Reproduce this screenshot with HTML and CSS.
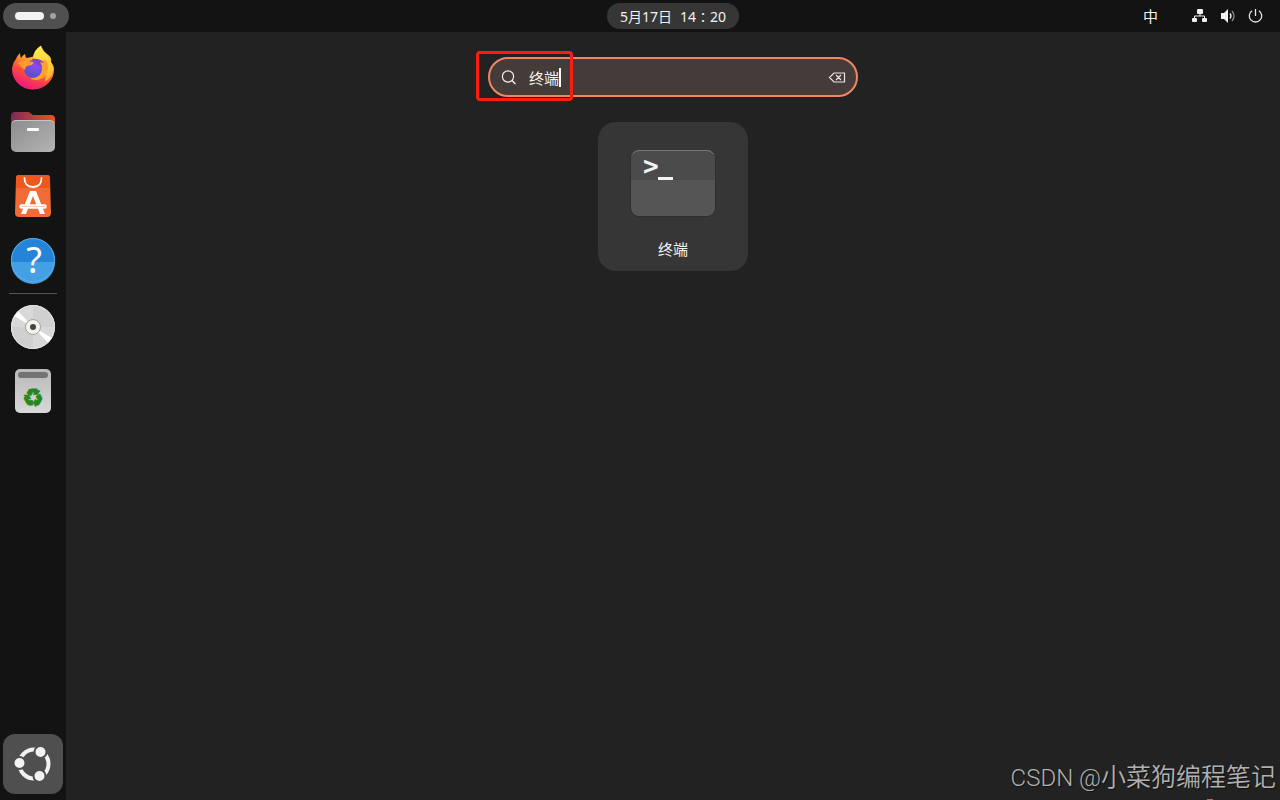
FILE: index.html
```html
<!DOCTYPE html>
<html lang="zh-CN">
  <head>
    <meta charset="utf-8">
    <title>终端</title>
    <link rel="stylesheet" href="styles.css">
  </head>
  <body>
    <header class="topbar">
      <div class="topbar-left">
        <button class="workspaces" aria-label="工作区">
          <span class="workspace-active"></span>
          <span class="workspace-dot"></span>
        </button>
      </div>
      <button class="clock"><span>5月17日</span><span>14∶20</span></button>
      <div class="topbar-right">
        <button class="input-method">中</button>
        <button class="system-menu" aria-label="系统菜单">
          <svg width="16" height="16" viewBox="0 0 16 16">
            <rect x="5" y="1" width="6" height="5" rx="1" fill="#f2f2f2"/>
            <rect x="0" y="10" width="5" height="4" rx="1" fill="#f2f2f2"/>
            <rect x="10" y="10" width="5" height="4" rx="1" fill="#f2f2f2"/>
            <path d="M8 5v3M2.500 11V8h10v3" fill="none" stroke="#f2f2f2"/>
          </svg>
          <svg width="16" height="16" viewBox="0 0 16 16">
            <path d="M1 5h3l4-4v14l-4-4H1z" fill="#f2f2f2"/>
            <path d="M10 5.500q2 2.500 0 5" fill="none" stroke="#f2f2f2" stroke-width="1.300"/>
            <path d="M12 3q4 5 0 10" fill="none" stroke="#8a8a8a" stroke-width="1.300"/>
          </svg>
          <svg width="16" height="16" viewBox="0 0 16 16">
            <path d="M4 2.700a6.200 6.200 0 1 0 7 0M7.500 1v7" fill="none" stroke="#e6e6e6" stroke-width="1.300"/>
          </svg>
        </button>
      </div>
    </header>

    <div class="desktop">
      <nav class="dock">
        <button class="dock-item" aria-label="Firefox">
          <svg width="48" height="48" viewBox="0 0 48 48">
            <defs>
              <linearGradient id="fox" x1="0.8" y1="0" x2="0.3" y2="1">
                <stop offset="0" stop-color="#fff04a"/>
                <stop offset="0.35" stop-color="#ffb42c"/>
                <stop offset="0.65" stop-color="#ff5038"/>
                <stop offset="1" stop-color="#e8108a"/>
              </linearGradient>
              <radialGradient id="globe" cx="0.65" cy="0.2" r="0.9">
                <stop offset="0" stop-color="#a044ee"/>
                <stop offset="0.5" stop-color="#7050e0"/>
                <stop offset="1" stop-color="#4a4fc4"/>
              </radialGradient>
              <linearGradient id="flame" x1="0" y1="0" x2="0" y2="1">
                <stop offset="0" stop-color="#fff252"/>
                <stop offset="1" stop-color="#ffae25"/>
              </linearGradient>
            </defs>
            <path d="M7 15q1-3 4-6q0 3 1 5q2-3 4-4q0 3 2 4l9-2q1-6 5-10q2 5 6 8q5 3 4 8q3 4 3 7a21 20 0 0 1-42 1q0-6 4-11z" fill="url(#fox)"/>
            <path d="M24 13q1-7 8-11.500q0 6 5 9.500l3 5q4 3 4 10q-1 8-8 12q3-13-6-20z" fill="url(#flame)"/>
            <path d="M37 16q5 9-2 17q-6 5-13 2l4-18z" fill="#ffa22c"/>
            <circle cx="24" cy="25" r="9" fill="url(#globe)"/>
            <path d="M23 15q8-1 12 4l-4-1q2 3 2 6l-8-5z" fill="#8440dc"/>
            <path d="M9 19q7-4 12-1.500l4 1q-1 3-7 3.500q-2 1-2 4q-4-2-7-7z" fill="#ff9a2e"/>
            <path d="M4 27q5 14 20 14q12-1 19-10q-5 14-20 14.500q-16-1-19-18.500z" fill="#ff2860" opacity="0.4"/>
          </svg>
        </button>
        <button class="dock-item" aria-label="文件">
          <svg width="48" height="48" viewBox="0 0 48 48">
            <defs>
              <linearGradient id="folder-back">
                <stop offset="0" stop-color="#7c2a58"/>
                <stop offset="1" stop-color="#e95420"/>
              </linearGradient>
              <linearGradient id="folder-front" x1="0" y1="0" x2="1" y2="1">
                <stop offset="0" stop-color="#8c8c8c"/>
                <stop offset="1" stop-color="#b4b4b4"/>
              </linearGradient>
            </defs>
            <path d="M2 8q0-4 4-4h13q2 0 3 1.500t3 1.500h17q4 0 4 4v16H2z" fill="url(#folder-back)"/>
            <rect x="2" y="12" width="44" height="32" rx="5" fill="url(#folder-front)"/>
            <path d="M3 15q1-2.500 4-2.500h34q3 0 4 2.500" fill="none" stroke="#c4c4c4"/>
            <rect x="18" y="20" width="12" height="3" rx="1" fill="#fff"/>
          </svg>
        </button>
        <button class="dock-item" aria-label="软件中心">
          <svg width="48" height="48" viewBox="0 0 48 48">
            <path d="M10 3h28q3 0 3 3l1 35q0 4-4 4H10q-4 0-4-4L7 6q0-3 3-3z" fill="#f26a35"/>
            <path d="M10 3h28q3 0 3 3v10H7V6q0-3 3-3z" fill="#ee571e"/>
            <path d="M15.500 6q0 9 8.500 9t8.500-9" fill="none" stroke="#fff" stroke-width="1.800" stroke-linecap="round"/>
            <path d="M21 19h6l9 23h-5l-7-18-7 18h-5z" fill="#fff"/>
            <path d="M12.500 34.500h23" stroke="#fff" stroke-width="4.500" stroke-linecap="round"/>
            <path d="M12 34.500h24" stroke="#f6b294" stroke-width="0.700"/>
          </svg>
        </button>
        <button class="dock-item" aria-label="帮助">
          <svg width="48" height="48" viewBox="0 0 48 48">
            <circle cx="24" cy="24" r="22" fill="#2485d8"/>
            <path d="M2 26h44a22 22 0 0 1-44 0z" fill="#45a0e3"/>
            <circle cx="24" cy="24" r="21.500" fill="none" stroke="#5aade8"/>
            <text x="25" y="37" class="help-mark">?</text>
          </svg>
        </button>
        <hr class="dock-line">
        <button class="dock-item" aria-label="光盘">
          <svg width="48" height="48" viewBox="0 0 48 48">
            <circle cx="24" cy="24" r="22" fill="#d8d8d8"/>
            <path d="M24 24V2A22 22 0 0 1 46 24zM24 24V46A22 22 0 0 1 2 24z" fill="#d0d0d0"/>
            <path d="M24 24L5 13l4-5zM24 24l19 11-4 5z" fill="#fff"/>
            <circle cx="24" cy="24" r="21.500" fill="none" stroke="#e4e4e4"/>
            <circle cx="24" cy="24" r="7.500" fill="#f2f2f0" stroke="#aaa58f"/>
            <circle cx="24" cy="24" r="3" fill="#444"/>
          </svg>
        </button>
        <button class="dock-item" aria-label="回收站">
          <svg width="48" height="48" viewBox="0 0 48 48">
            <defs>
              <linearGradient id="bin" x1="0" y1="0" x2="0" y2="1">
                <stop offset="0" stop-color="#b8b8b8"/>
                <stop offset="1" stop-color="#d8d8d8"/>
              </linearGradient>
            </defs>
            <rect x="6" y="2" width="36" height="44" rx="5" fill="url(#bin)"/>
            <rect x="9" y="5" width="30" height="6" rx="3" fill="#737373"/>
            <text x="24" y="39" class="recycle">♻</text>
          </svg>
        </button>
        <button class="show-apps" aria-label="显示应用">
          <svg width="40" height="40" viewBox="0 0 40 40">
            <circle cx="21" cy="20" r="14.500" fill="none" stroke="#f2f2f2" stroke-width="4"/>
            <g fill="#f2f2f2" stroke="#4f4f4f" stroke-width="2">
              <circle cx="6.500" cy="19" r="6"/>
              <circle cx="27.500" cy="8" r="6"/>
              <circle cx="26.500" cy="32" r="6"/>
            </g>
          </svg>
        </button>
      </nav>

      <main class="overview">
        <label class="search">
          <svg width="16" height="16" viewBox="0 0 16 16">
            <circle cx="7" cy="7.500" r="5.600" fill="none" stroke="#eee" stroke-width="1.200"/>
            <path d="M11 11.500l3.500 3.500" stroke="#eee" stroke-width="1.500"/>
          </svg>
          <span class="search-text">
            <input class="search-input" type="text" value="终端" aria-label="搜索">
            <span class="caret"></span>
          </span>
          <button class="clear" aria-label="清除">
            <svg width="18" height="16" viewBox="0 0 18 16">
              <path d="M6 4h10.500v9H6L1.500 8.500zM8 6l5 5M13 6l-5 5" fill="none" stroke="#e8e8e8" stroke-width="1.200"/>
            </svg>
          </button>
          <span class="highlight"></span>
        </label>

        <button class="result">
          <svg width="96" height="96" viewBox="0 0 96 96">
            <rect x="5" y="15" width="86" height="67" rx="9" fill="#2e2e2e"/>
            <rect x="6" y="15" width="84" height="66" rx="8" fill="#555"/>
            <path d="M6 45V23q0-8 8-8h68q8 0 8 8v22z" fill="#4b4b4b"/>
            <path d="M8 19q2-3.500 6-3.500h68q4 0 6 3.500" fill="none" stroke="#777"/>
            <text x="18" y="40" class="prompt">&gt;</text>
            <path d="M33 43.500h15" stroke="#f2f2f2" stroke-width="3"/>
          </svg>
          <span>终端</span>
        </button>

        <div class="watermark"><span class="watermark-site">CSDN @</span>小菜狗编程笔记</div>
        <span class="edge-mark"></span>
      </main>
    </div>
  </body>
</html>
```

FILE: styles.css
```css
* {
  box-sizing: border-box;
}

body {
  display: flex;
  flex-direction: column;
  min-height: 100vh;
  margin: 0;
  background: #222;
  color: #f2f2f2;
  font-family: "Noto Sans", "Noto Sans CJK SC", sans-serif;
  font-size: 15px;
}

button {
  padding: 0;
  border: 0;
  background: none;
  color: inherit;
  font: inherit;
}

svg {
  display: block;
  overflow: visible;
}

/* top bar, the clock is centered over the area right of the dock */
.topbar {
  display: grid;
  grid-template-columns: 1fr auto calc(50% - 99px);
  align-items: center;
  height: 32px;
  background: #131313;
}

.topbar-left {
  padding-left: 3px;
}

.workspaces {
  display: flex;
  align-items: center;
  gap: 6px;
  width: 66px;
  height: 26px;
  padding: 0 12px;
  border-radius: 13px;
  background: #505050;
}

.workspace-active {
  width: 29px;
  height: 8px;
  border-radius: 4px;
  background: #f2f2f2;
}

.workspace-dot {
  width: 6px;
  height: 6px;
  border-radius: 50%;
  background: #a2a2a2;
}

.clock {
  display: flex;
  align-items: center;
  justify-content: center;
  gap: 8px;
  width: 132px;
  height: 26px;
  border-radius: 13px;
  background: #363636;
  font-size: 14px;
}

.topbar-right {
  display: flex;
  align-items: center;
  justify-content: flex-end;
  gap: 34px;
  padding-right: 16px;
}

.input-method {
  line-height: 20px;
}

.system-menu {
  display: flex;
  gap: 12px;
}

/* dock */
.desktop {
  display: flex;
  flex: 1;
}

.dock {
  display: flex;
  flex-direction: column;
  align-items: center;
  gap: 16px;
  width: 66px;
  padding: 12px 0 6px;
  background: #131313;
}

.dock-line {
  width: 48px;
  height: 1px;
  margin: -7px 0;
  border: 0;
  background: #555;
}

.help-mark {
  fill: #fff;
  font-family: "Noto Sans", sans-serif;
  font-size: 36px;
  text-anchor: middle;
}

.recycle {
  fill: #26871c;
  stroke: #26871c;
  stroke-width: 1px;
  font-family: "DejaVu Sans", sans-serif;
  font-size: 24px;
  text-anchor: middle;
}

.show-apps {
  display: grid;
  place-items: center;
  width: 60px;
  height: 60px;
  margin-top: auto;
  border-radius: 12px;
  background: #4f4f4f;
}

/* search and results */
.overview {
  position: relative;
  display: flex;
  flex: 1;
  flex-direction: column;
  align-items: center;
  gap: 25px;
  padding-top: 25px;
}

.search {
  position: relative;
  display: flex;
  align-items: center;
  gap: 12px;
  width: 370px;
  max-width: 100%;
  height: 40px;
  padding: 0 10px 0 11px;
  border: 2px solid #f08763;
  border-radius: 20px;
  background: #453b38;
}

.search-text {
  display: flex;
  flex: 1;
  align-items: center;
}

.search-input {
  field-sizing: content;
  padding: 0;
  border: 0;
  outline: 0;
  background: none;
  color: #f2f2f2;
  font: inherit;
}

.caret {
  width: 2px;
  height: 19px;
  background: #fff;
}

.highlight {
  position: absolute;
  top: -8px;
  left: -14px;
  width: 97px;
  height: 50px;
  border: 3px solid #fb1d10;
  border-radius: 4px;
  pointer-events: none;
}

.result {
  display: flex;
  flex-direction: column;
  align-items: center;
  justify-content: flex-end;
  gap: 8px;
  width: 150px;
  height: 149px;
  padding-bottom: 12px;
  border-radius: 18px;
  background: #363636;
  line-height: 20px;
}

.prompt {
  fill: #f2f2f2;
  font-family: "DejaVu Sans Mono", monospace;
  font-size: 26px;
  font-weight: bold;
}

.watermark {
  position: absolute;
  right: 4px;
  bottom: 7px;
  color: #b0b0b0;
  font-family: Roboto, "Noto Sans CJK SC", sans-serif;
  font-size: 25px;
  font-weight: 350;
  text-shadow: 1px 1px 1px #111;
}

.watermark-site {
  font-size: 24px;
}

.edge-mark {
  position: absolute;
  right: 67px;
  bottom: 0;
  width: 6px;
  height: 1px;
  background: #c8673a;
}
```
